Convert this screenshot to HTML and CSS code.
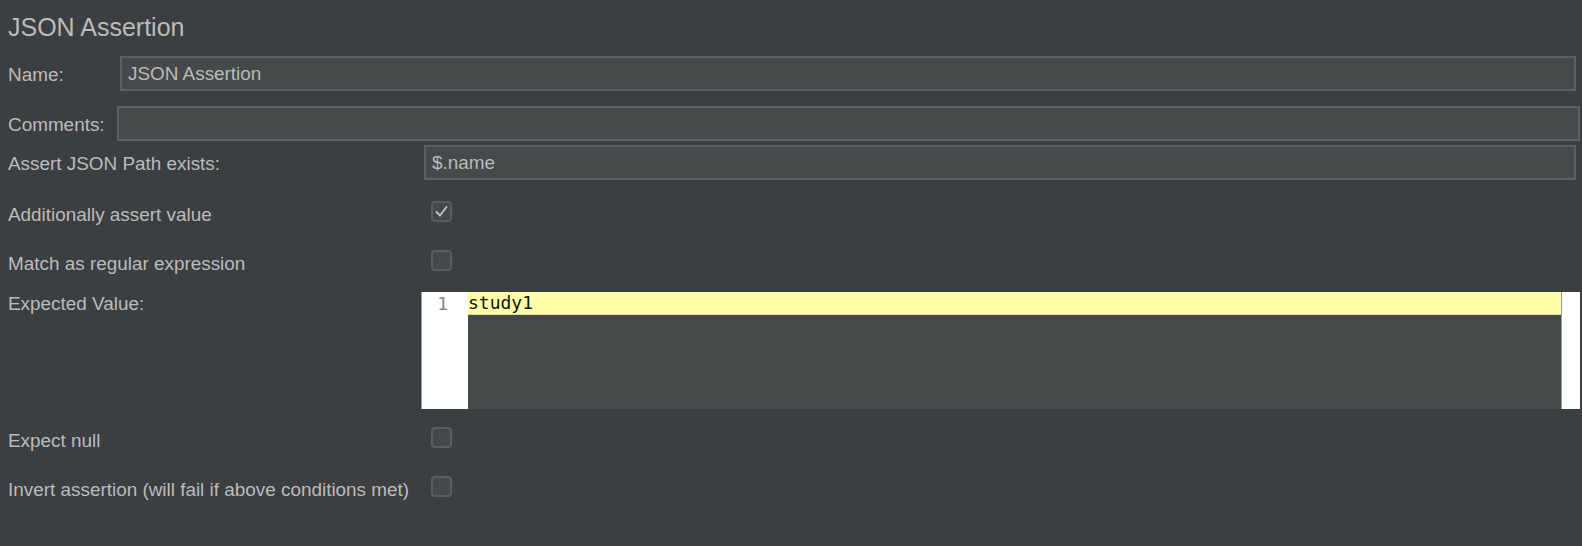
FILE: index.html
```html
<!DOCTYPE html>
<html lang="en">
<head>
    <meta charset="UTF-8">
    <meta name="viewport" content="width=device-width, initial-scale=1.0">
    <title>JSON Assertion</title>
    <link rel="stylesheet" href="styles.css">
</head>
<body>
    <div class="panel">
        <h1 class="title">JSON Assertion</h1>

        <div class="row name-row">
            <label class="label name-label">Name:</label>
            <div class="field">JSON Assertion</div>
        </div>

        <div class="row comments-row">
            <label class="label comments-label">Comments:</label>
            <div class="field"></div>
        </div>

        <div class="form">
            <div class="row path-row">
                <label class="label col-label path-label">Assert JSON Path exists:</label>
                <div class="field path-field">$.name</div>
            </div>

            <div class="row check-row">
                <label class="label col-label">Additionally assert value</label>
                <span class="checkbox">
                    <svg width="15" height="15" viewBox="0 0 15 15">
                        <path d="M2.5 8 L6 11.5 L12.5 3" fill="none" stroke="#bdbdbd" stroke-width="2" stroke-linecap="round" stroke-linejoin="round"/>
                    </svg>
                </span>
            </div>

            <div class="row check-row">
                <label class="label col-label">Match as regular expression</label>
                <span class="checkbox"></span>
            </div>

            <div class="row editor-row">
                <label class="label col-label top-label">Expected Value:</label>
                <div class="editor">
                    <div class="gutter">1</div>
                    <div class="code">
                        <div class="line current">study1</div>
                    </div>
                    <div class="scrollbar"></div>
                </div>
            </div>

            <div class="row check-row after-editor">
                <label class="label col-label">Expect null</label>
                <span class="checkbox"></span>
            </div>

            <div class="row check-row">
                <label class="label col-label">Invert assertion (will fail if above conditions met)</label>
                <span class="checkbox"></span>
            </div>
        </div>
    </div>
</body>
</html>
```

FILE: styles.css
```css
body {
    margin: 0;
    background-color: #3c3f41;
    color: #bbbbbb;
    font-family: "Liberation Sans", Arial, sans-serif;
    font-size: 18.9px;
}

.panel {
    width: 1582px;
    height: 546px;
}

.title {
    margin: 0;
    padding: 13px 0 0 8px;
    height: 44px;
    box-sizing: border-box;
    font-size: 25px;
    font-weight: normal;
    line-height: 28px;
}

.row {
    display: flex;
    align-items: center;
}

.label {
    padding-left: 8px;
    box-sizing: border-box;
    white-space: nowrap;
}

.field {
    flex-grow: 1;
    height: 35px;
    box-sizing: border-box;
    border: 2px solid #5d5f60;
    background-color: #45494a;
    padding: 0 6px;
    line-height: 31px;
}

.name-row {
    margin-top: 12px;
    margin-right: 6px;
}

.name-label {
    width: 120px;
    padding-top: 2px;
}

.comments-row {
    margin-top: 15px;
    margin-right: 2px;
}

.comments-label {
    width: 117px;
    padding-top: 2px;
}

.col-label {
    width: 421px;
    flex-shrink: 0;
}

.path-row {
    margin-top: 4px;
    margin-right: 6px;
    margin-bottom: 7px;
}

.path-label {
    padding-top: 3px;
}

.path-field {
    margin-left: 3px;
}

.check-row {
    height: 49px;
}

.check-row .label {
    padding-top: 7px;
}

.checkbox {
    width: 21px;
    height: 21px;
    margin-left: 10px;
    box-sizing: border-box;
    border: 2px solid #5a5d5e;
    border-radius: 4px;
    background-color: #43484a;
    display: flex;
    align-items: center;
    justify-content: center;
}

.editor-row {
    align-items: flex-start;
    margin-top: 7px;
    margin-right: 2px;
}

.top-label {
    line-height: 23px;
}

.editor {
    flex-grow: 1;
    height: 117px;
    display: flex;
    background-color: #45494a;
}

.gutter {
    width: 47px;
    background-color: #ffffff;
    border-left: 1px solid #9a9a9a;
    box-sizing: border-box;
    text-align: right;
    padding-right: 20px;
    font-family: "DejaVu Sans Mono", monospace;
    font-size: 18px;
    line-height: 23px;
    color: #888888;
}

.code {
    flex-grow: 1;
    font-family: "DejaVu Sans Mono", monospace;
    font-size: 18px;
    line-height: 23px;
    color: #111111;
}

.line.current {
    background-color: #ffffaa;
    border-bottom: 1px solid #dcdc9a;
    height: 22px;
    line-height: 22px;
}

.scrollbar {
    width: 18px;
    background-color: #ffffff;
    border-left: 1px solid #9a9a9a;
}

.after-editor {
    margin-top: 4px;
}
```
